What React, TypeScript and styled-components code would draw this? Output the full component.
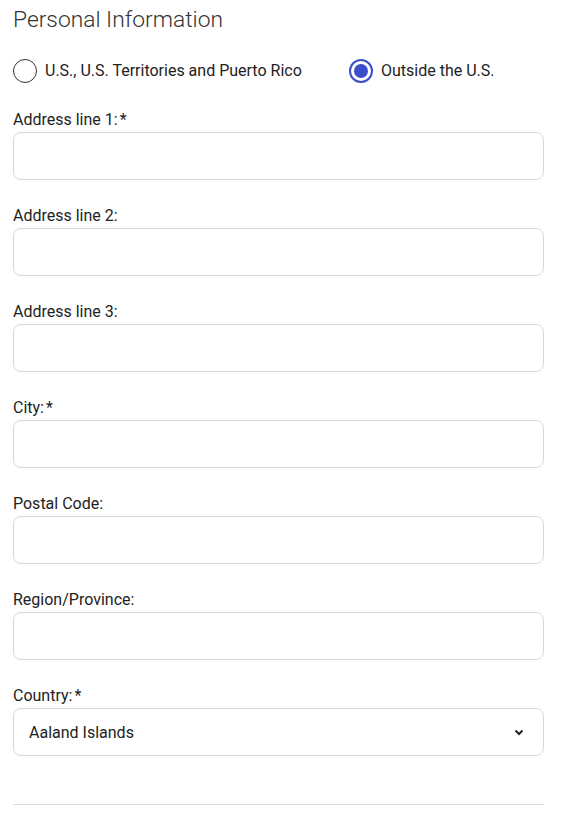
import React, { useState } from "react";
import styled, { createGlobalStyle } from "styled-components";

const GlobalStyle = createGlobalStyle`
  html, body { margin: 0; padding: 0; background: #ffffff; }
  body { font-family: Roboto, "Liberation Sans", Arial, sans-serif; color: #222; }
  * { box-sizing: border-box; }
`;

const Page = styled.div`
  padding: 4px 24px 12px 13px;
  display: flex;
  flex-direction: column;
`;

const Title = styled.h2`
  margin: 0;
  font-size: 22.8px;
  line-height: 32px;
  font-weight: 300;
  color: #333;
`;

const RadioRow = styled.div`
  display: flex;
  align-items: center;
  margin-top: 23px;
  margin-bottom: 27px;
`;

const RadioOption = styled.label<{ $width?: number }>`
  display: flex;
  align-items: center;
  gap: 8px;
  font-size: 16px;
  line-height: 24px;
  color: #222;
  cursor: pointer;
  width: ${(p) => (p.$width ? `${p.$width}px` : "auto")};
`;

const RadioCircle = styled.span<{ $checked: boolean }>`
  width: 24px;
  height: 24px;
  border-radius: 50%;
  border: ${(p) => (p.$checked ? "2px solid #3a4dcb" : "1.5px solid #333")};
  display: flex;
  align-items: center;
  justify-content: center;
  flex-shrink: 0;
  &::after {
    content: "";
    display: ${(p) => (p.$checked ? "block" : "none")};
    width: 14px;
    height: 14px;
    border-radius: 50%;
    background: #3a4dcb;
  }
`;

const Field = styled.div`
  display: flex;
  flex-direction: column;
  margin-bottom: 26px;
`;

const Label = styled.label`
  font-size: 16px;
  line-height: 20px;
  color: #222;
  margin-bottom: 2px;
`;

const Required = styled.span`
  margin-left: 2px;
`;

const Input = styled.input`
  height: 48px;
  width: 100%;
  border: 1px solid #d9d9d9;
  border-radius: 8px;
  padding: 0 16px;
  font-size: 16px;
  font-family: inherit;
  color: #222;
  outline: none;
`;

const SelectBox = styled.div`
  height: 48px;
  width: 100%;
  border: 1px solid #d9d9d9;
  border-radius: 8px;
  padding: 0 19px 0 15px;
  display: flex;
  align-items: center;
  justify-content: space-between;
  font-size: 16px;
  color: #222;
`;

const Divider = styled.hr`
  margin: 22px 0 0 0;
  border: none;
  border-top: 1px solid #dcdcdc;
`;

const fields: { label: string; required?: boolean }[] = [
  { label: "Address line 1:", required: true },
  { label: "Address line 2:" },
  { label: "Address line 3:" },
  { label: "City:", required: true },
  { label: "Postal Code:" },
  { label: "Region/Province:" },
];

export default function App() {
  const [choice, setChoice] = useState("out");
  return (
    <>
      <GlobalStyle />
      <Page>
        <Title>Personal Information</Title>
        <RadioRow>
          <RadioOption $width={336} onClick={() => setChoice("us")}>
            <RadioCircle $checked={choice === "us"} />
            U.S., U.S. Territories and Puerto Rico
          </RadioOption>
          <RadioOption onClick={() => setChoice("out")}>
            <RadioCircle $checked={choice === "out"} />
            Outside the U.S.
          </RadioOption>
        </RadioRow>
        {fields.map((f) => (
          <Field key={f.label}>
            <Label>
              {f.label}
              {f.required && <Required>*</Required>}
            </Label>
            <Input />
          </Field>
        ))}
        <Field>
          <Label>
            Country:<Required>*</Required>
          </Label>
          <SelectBox>
            <span>Aaland Islands</span>
            <svg width="10" height="7" viewBox="0 0 10 7">
              <path d="M1.5 1.5 L5 5 L8.5 1.5" fill="none" stroke="#222" strokeWidth="2" />
            </svg>
          </SelectBox>
        </Field>
        <Divider />
      </Page>
    </>
  );
}
